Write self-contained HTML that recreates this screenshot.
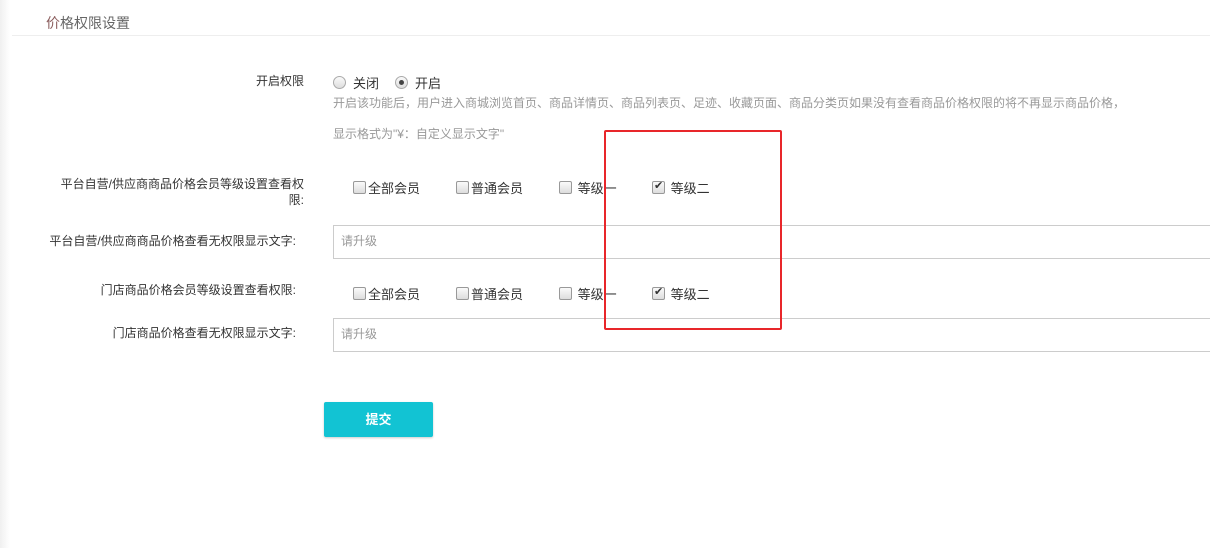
<html><head><style>
body{margin:0;width:1210px;height:548px;background:#fff;position:relative;overflow:hidden;font-family:"Liberation Sans","Noto Sans CJK SC",sans-serif;color:#333}
.a{position:absolute;white-space:nowrap}
.lbl{position:absolute;text-align:right;font-size:12px;color:#333;line-height:16px}
.cb{position:absolute;font-size:13px;color:#333;top:0}
.box{display:inline-block;width:11px;height:11px;border:1px solid #999;border-radius:2px;background:linear-gradient(#fafafa,#ddd);vertical-align:-1px;margin-right:2px;position:relative}
.inp{position:absolute;left:333px;width:880px;height:32px;border:1px solid #ccc;box-sizing:border-box;font-size:12px;color:#999;padding-left:7px;line-height:31px}
.rad{position:absolute;top:3px;width:11px;height:11px;border:1px solid #aaa;border-radius:50%;background:linear-gradient(#fafafa,#ddd)}
</style></head><body>
<div class="a" style="left:0;top:0;width:10px;height:548px;background:linear-gradient(90deg,#f0f0f0,#fff)"></div>
<div class="a" style="left:46px;top:13px;font-size:14px;color:#666"><span style="color:#8a5c5c">价</span>格权限设置</div>
<div class="a" style="left:12px;top:35px;width:1198px;height:1px;background:#eee"></div>
<div class="lbl" style="left:200px;width:104px;top:73px">开启权限</div>
<div class="a" style="left:333px;top:73px;width:150px;height:18px;font-size:13px">
<span class="rad" style="left:0"></span><span class="a" style="left:20px;top:0">关闭</span>
<span class="rad" style="left:62px"><span style="position:absolute;left:3px;top:3px;width:5px;height:5px;border-radius:50%;background:#444"></span></span><span class="a" style="left:82px;top:0">开启</span></div>
<div class="a" style="left:333px;top:94px;font-size:12px;color:#999">开启该功能后，用户进入商城浏览首页、商品详情页、商品列表页、足迹、收藏页面、商品分类页如果没有查看商品价格权限的将不再显示商品价格，</div>
<div class="a" style="left:333px;top:125px;font-size:12px;color:#999">显示格式为"¥：自定义显示文字"</div>
<div class="lbl" style="left:50px;width:254px;top:176px">平台自营/供应商商品价格会员等级设置查看权<br>限:</div>
<div class="a" style="left:0;top:178px;width:800px;height:20px">
<div class="cb" style="left:353px"><span class="box"></span>全部会员</div>
<div class="cb" style="left:456px"><span class="box"></span>普通会员</div>
<div class="cb" style="left:559px"><span class="box"></span> 等级一</div>
<div class="cb" style="left:652px"><span class="box"><span style="position:absolute;left:1px;top:-3px;font-size:11px;color:#333">✔</span></span> 等级二</div>
</div>
<div class="lbl" style="left:0;width:296px;top:233px">平台自营/供应商商品价格查看无权限显示文字:</div>
<div class="inp" style="top:225px;height:34px">请升级</div>
<div class="lbl" style="left:0;width:296px;top:282px">门店商品价格会员等级设置查看权限:</div>
<div class="a" style="left:0;top:284px;width:800px;height:20px">
<div class="cb" style="left:353px"><span class="box"></span>全部会员</div>
<div class="cb" style="left:456px"><span class="box"></span>普通会员</div>
<div class="cb" style="left:559px"><span class="box"></span> 等级一</div>
<div class="cb" style="left:652px"><span class="box"><span style="position:absolute;left:1px;top:-3px;font-size:11px;color:#333">✔</span></span> 等级二</div>
</div>
<div class="lbl" style="left:0;width:296px;top:325px">门店商品价格查看无权限显示文字:</div>
<div class="inp" style="top:318px;height:34px">请升级</div>
<div class="a" style="left:324px;top:402px;width:109px;height:35px;background:#12c3d3;border-radius:2px;color:#fff;font-size:13px;font-weight:bold;text-align:center;line-height:35px;box-shadow:0 1px 2px rgba(0,0,0,.2)">提交</div>
<div class="a" style="left:604px;top:130px;width:174px;height:196px;border:2px solid #e8262a;border-radius:2px"></div>
</body></html>
